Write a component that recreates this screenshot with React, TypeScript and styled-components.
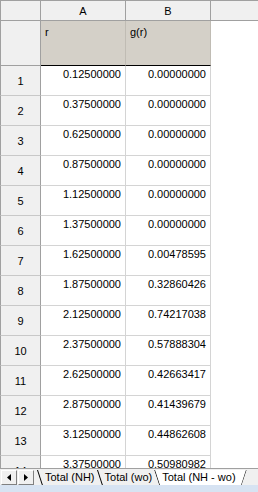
import React from 'react';
import styled, { createGlobalStyle } from 'styled-components';

const rows: [string, string][] = [
  ['0.12500000', '0.00000000'],
  ['0.37500000', '0.00000000'],
  ['0.62500000', '0.00000000'],
  ['0.87500000', '0.00000000'],
  ['1.12500000', '0.00000000'],
  ['1.37500000', '0.00000000'],
  ['1.62500000', '0.00478595'],
  ['1.87500000', '0.32860426'],
  ['2.12500000', '0.74217038'],
  ['2.37500000', '0.57888304'],
  ['2.62500000', '0.42663417'],
  ['2.87500000', '0.41439679'],
  ['3.12500000', '0.44862608'],
  ['3.37500000', '0.50980982'],
];

const tabs = ['Total (NH)', 'Total (wo)', 'Total (NH - wo)'];

const GlobalStyle = createGlobalStyle`
  html, body {
    margin: 0;
    padding: 0;
    background: #fff;
  }
  body {
    font-family: 'Liberation Sans', Arial, sans-serif;
    color: #000;
  }
`;

const App = () => {
  return (
    <>
      <GlobalStyle />
      <Window>
        <Sheet>
          <Corner />
          <ColHead>A</ColHead>
          <ColHead>B</ColHead>
          <HeadFill />

          <RowHead $title />
          <TitleCell>r</TitleCell>
          <TitleCell>g(r)</TitleCell>
          <Blank />

          {rows.map(([r, g], i) => (
            <React.Fragment key={i}>
              <RowHead>{i + 1}</RowHead>
              <ValueCell>{r}</ValueCell>
              <ValueCell>{g}</ValueCell>
              <Blank />
            </React.Fragment>
          ))}
        </Sheet>

        <TabBar>
          <NavButton>
            <svg width="4" height="7" viewBox="0 0 4 7">
              <polygon points="4,0 4,7 0,3.5" fill="#000" />
            </svg>
          </NavButton>
          <NavButton>
            <svg width="4" height="7" viewBox="0 0 4 7">
              <polygon points="0,0 0,7 4,3.5" fill="#000" />
            </svg>
          </NavButton>
          <Tabs>
            {tabs.map((t, i) => (
              <Tab key={t} $active={i === tabs.length - 1}>
                {t}
              </Tab>
            ))}
          </Tabs>
        </TabBar>
        <FrameBand />
      </Window>
    </>
  );
};

export default App;

const Window = styled.div`
  width: 258px;
  height: 492px;

  display: flex;
  flex-direction: column;

  overflow: hidden;
  background: #fff;
`;

const Sheet = styled.div`
  flex: 1;
  min-height: 0;

  display: grid;
  grid-template-columns: 41px 85px 85px 1fr;
  grid-template-rows: 21px 45px;
  grid-auto-rows: 30px;

  overflow: hidden;
  font-size: 11px;
`;

const HeaderBase = styled.div`
  box-sizing: border-box;

  display: flex;
  align-items: center;
  justify-content: center;

  border-top: 1px solid #a0a0a0;
  border-bottom: 1px solid #a0a0a0;
  border-right: 1px solid #a0a0a0;
  background: #f0f0f0;
`;

const Corner = styled(HeaderBase)`
  border-left: 1px solid #a0a0a0;
`;

const ColHead = styled(HeaderBase)`
  padding-top: 1px;
`;

const HeadFill = styled(HeaderBase)`
  border-right: none;
`;

const RowHead = styled.div<{ $title?: boolean }>`
  box-sizing: border-box;

  display: flex;
  align-items: center;
  justify-content: center;

  border-left: 1px solid #a0a0a0;
  border-right: 1px solid #a0a0a0;
  border-bottom: 1px solid ${({ $title }) => ($title ? '#a0a0a0' : '#c8c8c8')};
  background: #f0f0f0;

  padding-top: 1px;
`;

const TitleCell = styled.div`
  box-sizing: border-box;
  padding: 5px 4px 0;

  border-right: 1px solid #c0bcb4;
  border-bottom: 1px solid #000;
  background: #d4d0c8;
`;

const ValueCell = styled.div`
  box-sizing: border-box;
  padding: 2px 4px 0 0;

  text-align: right;
  line-height: 13px;

  border-right: 1px solid #d4d4d4;
  border-bottom: 1px solid #d4d4d4;
  background: #fff;
`;

const Blank = styled.div`
  background: #fff;
`;

const TabBar = styled.div`
  box-sizing: border-box;
  height: 17px;
  flex-shrink: 0;

  display: flex;
  align-items: flex-start;
  gap: 1px;

  padding: 1px 0 0 1px;

  border-top: 1px solid #a0a0a0;
  background: #f0f0f0;
`;

const NavButton = styled.button`
  box-sizing: border-box;
  width: 16px;
  height: 15px;
  padding: 0;

  display: flex;
  align-items: center;
  justify-content: center;

  border: 1px solid;
  border-color: #fff #808080 #808080 #fff;
  background: #f0f0f0;
`;

const Tabs = styled.div`
  display: flex;
  margin-left: 2px;
`;

const Tab = styled.div<{ $active?: boolean }>`
  position: relative;
  height: 15px;
  padding: 0 ${({ $active }) => ($active ? '11px' : '2px')} 0 8px;

  font-size: 11px;
  line-height: 14px;
  white-space: nowrap;

  background: ${({ $active }) => ($active ? '#fff' : 'transparent')};
  clip-path: ${({ $active }) =>
    $active ? 'polygon(0 0, 100% 0, calc(100% - 5px) 100%, 5px 100%)' : 'none'};

  &::before {
    content: '';
    position: absolute;
    left: 0;
    top: 0;
    width: 1px;
    height: 100%;
    background: #000;
    transform-origin: top left;
    transform: skewX(18deg);
  }

  &::after {
    content: '';
    display: ${({ $active }) => ($active ? 'block' : 'none')};
    position: absolute;
    right: 0;
    top: 0;
    width: 1px;
    height: 100%;
    background: #000;
    transform-origin: top right;
    transform: skewX(-18deg);
  }
`;

const FrameBand = styled.div`
  height: 7px;
  flex-shrink: 0;
  background: #d7e3f2;
`;
